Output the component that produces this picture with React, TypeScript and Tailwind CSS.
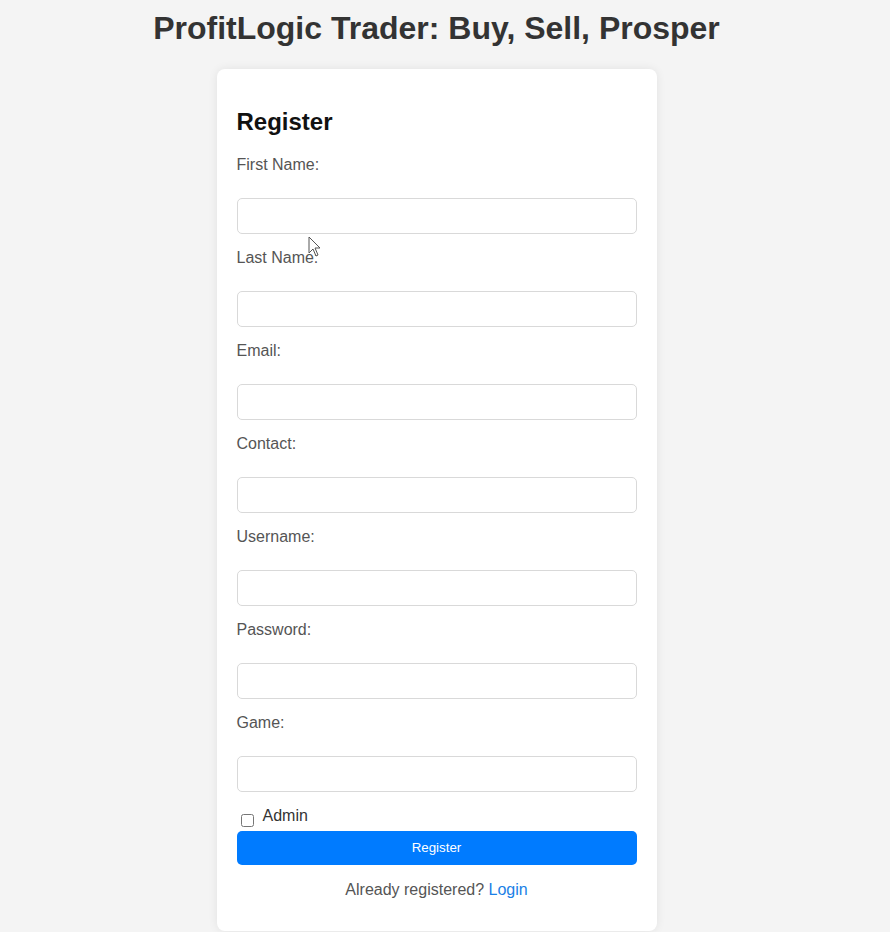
import React from "react";

const fields = ["First Name:", "Last Name:", "Email:", "Contact:", "Username:", "Password:", "Game:"];

export default function App() {
  return (
    <div
      className="relative min-h-[932px] bg-[#f4f4f4] pr-[17px] pt-[10px] overflow-hidden"
      style={{ fontFamily: '"Liberation Sans", Arial, Helvetica, sans-serif' }}
    >
      <h1 className="text-center text-[32px] leading-[37px] font-bold text-[#333] m-0">
        ProfitLogic Trader: Buy, Sell, Prosper
      </h1>
      <div className="mx-auto mt-[22px] w-[440px] h-[862px] bg-white rounded-[8px] shadow-[0_0_10px_rgba(0,0,0,0.08)] px-[20px] pt-[39px]">
        <h2 className="text-[24px] leading-[28px] font-bold text-[#111] m-0">Register</h2>
        <div className="mt-[20px] flex flex-col gap-[15px]">
          {fields.map((f) => (
            <div key={f} className="flex flex-col">
              <label className="text-[16px] leading-[18px] text-[#555]">{f}</label>
              <input
                type="text"
                className="mt-[24px] h-[36px] w-full border border-[#d9d9d9] rounded-[5px] bg-white outline-none"
              />
            </div>
          ))}
          <div className="flex items-start h-[24px]">
            <input type="checkbox" className="ml-[4px] mt-[7px] w-[13px] h-[13px] m-0" />
            <span className="ml-[9px] text-[16px] leading-[18px] text-[#333]">Admin</span>
          </div>
        </div>
        <button className="block w-full h-[34px] bg-[#007bff] rounded-[5px] text-white text-[13.33px] leading-[34px] text-center">
          Register
        </button>
        <p className="mt-[16px] text-center text-[16px] leading-[18px] text-[#555]">
          Already registered? <a className="text-[#1a7fe6]">Login</a>
        </p>
      </div>
      <svg
        className="absolute left-[308px] top-[236px]"
        width="14"
        height="22"
        viewBox="0 0 14 22"
      >
        <path d="M1 1 L1 17 L5 13 L8 20 L10 19 L7 12 L12 12 Z" fill="white" stroke="#555" strokeWidth="1" strokeLinejoin="round" />
      </svg>
    </div>
  );
}
